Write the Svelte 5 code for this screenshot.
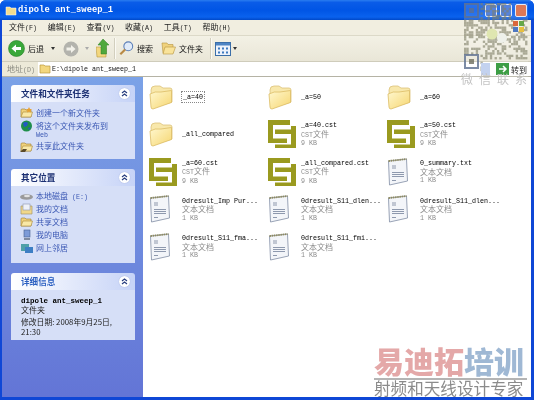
<script>
  const files = [
    { n: '_a=40', k: 'folder', focus: true },
    { n: '_a=50', k: 'folder' },
    { n: '_a=60', k: 'folder' },
    { n: '_all_compared', k: 'folder' },
    { n: '_a=40.cst', k: 'cst' },
    { n: '_a=50.cst', k: 'cst' },
    { n: '_a=60.cst', k: 'cst' },
    { n: '_all_compared.cst', k: 'cst' },
    { n: '0_summary.txt', k: 'txt' },
    { n: '0dresult_Imp Pur...', k: 'txt' },
    { n: '0dresult_S11_dlen...', k: 'txt' },
    { n: '0dresult_S11_dlen...', k: 'txt' },
    { n: '0dresult_S11_fma...', k: 'txt' },
    { n: '0dresult_S11_fmi...', k: 'txt' }
  ];
  const tasks = [
    { t: '创建一个新文件夹', i: 'newf' },
    { t: '将这个文件夹发布到', i: 'globe', sub: 'Web' },
    { t: '共享此文件夹', i: 'share' }
  ];
  const places = [
    { t: '本地磁盘', m: ' (E:)', i: 'disk' },
    { t: '我的文档', i: 'docs' },
    { t: '共享文档', i: 'sdocs' },
    { t: '我的电脑', i: 'pc' },
    { t: '网上邻居', i: 'net' }
  ];
  const menus = [['文件', 'F'], ['编辑', 'E'], ['查看', 'V'], ['收藏', 'A'], ['工具', 'T'], ['帮助', 'H']];

  let seed = 12345;
  const rnd = () => ((seed = (seed * 1103515245 + 12345) & 0x7fffffff) / 0x7fffffff);
  const qr = [];
  const cols = 27, rowsN = 30, m = 2.35;
  const inFinder = (c, r) => (c < 7 && r < 7) || (c < 7 && r > 21) || (c > 19 && r < 7);
  for (let r = 0; r < rowsN; r++) {
    for (let c = 0; c < cols; c++) {
      if (!inFinder(c, r) && !(r > 23 && c > 7) && rnd() > 0.5) qr.push({ x: c * m, y: r * m });
    }
  }
</script>

{#snippet folderIcon()}
  <svg class="ic" width="24" height="26" viewBox="0 0 24 26">
    <path d="M2 6Q2 2 6 2H11L14 4H21Q23 4 23 6V18L3 24Z" fill="#f8e8ac" stroke="#dcc27a" stroke-width=".8" />
    <path d="M1 10Q6 7 12 8L22.500 6.500V18.500L4 25Q2 25 2 23Z" fill="url(#fg)" stroke="#dcbc66" stroke-width=".8" />
  </svg>
{/snippet}

{#snippet cstIcon()}
  <svg class="ic" width="28" height="28" viewBox="0 0 28 28">
    <path d="M0 0H22V5H5V18.500H19V23H0ZM7 9.500H23V6H28V28H7V24.500H23V14H7Z" fill="#9a9a1f" />
  </svg>
{/snippet}

{#snippet txtIcon()}
  <svg class="ic" width="22" height="28" viewBox="0 0 22 28">
    <path d="M1.500 3L19.500 1L20.500 23L2.500 27Z" fill="#f3f5f9" stroke="#8d99ae" stroke-width=".9" />
    <path d="M1.500 3L19.500 1" stroke="#8f8a5e" stroke-width="1.800" stroke-dasharray="1.500 .7" />
    <path d="M5 8H9M5 10H9M5 14.500H17M5 16.500H17M5 18.500H17M5 22.500H9" stroke="#74829a" stroke-width=".8" />
  </svg>
{/snippet}

{#snippet smallIcon(i)}
  <svg class="sic" width="13" height="12" viewBox="0 0 13 12">
    {#if i === 'globe'}
      <circle cx="6.500" cy="6" r="5.500" fill="#1f8f4a" /><path d="M3 3Q6 1 8 3L7 6L4 7ZM8 8L11 7L9 10Z" fill="#2458c4" />
    {:else if i === 'disk'}
      <ellipse cx="6.500" cy="7" rx="6.500" ry="2.800" fill="#9a9a9a" /><ellipse cx="7" cy="6" rx="3" ry="1.200" fill="#e2e2e2" />
    {:else if i === 'pc'}
      <rect x="4" y="1" width="6" height="7" fill="#7d9bd8" stroke="#47618f" stroke-width=".6" /><rect x="4" y="9" width="6" height="2" fill="#7f8aa0" />
    {:else if i === 'net'}
      <rect x="1" y="2" width="8" height="7" fill="#4fa0a8" /><rect x="5" y="5" width="8" height="6" fill="#3d7fc4" />
    {:else if i === 'docs'}
      <path d="M1 3H12V11H1Z" fill="#f1d88a" stroke="#a89a6a" stroke-width=".7" /><rect x="3" y="1" width="7" height="6" fill="#eef1f8" stroke="#8a95ad" stroke-width=".6" />
    {:else}
      <path d="M1 3Q1 2 2 2H5L6 3H11V10H1Z" fill="#f0d27c" stroke="#a8873a" stroke-width=".7" />
      <path d="M1 10L3 5H12.500L11 10Z" fill="#f9e8a6" stroke="#a8873a" stroke-width=".6" />
      {#if i === 'share'}<path d="M0 11L3 8H7L5 11Z" fill="#5a4a2a" />{/if}
      {#if i === 'newf'}<path d="M9 0L10 2L12 2L10.500 3.500L11 5.500L9 4.500L7 5.500L7.500 3.500L6 2L8 2Z" fill="#e8a030" />{/if}
    {/if}
  </svg>
{/snippet}

{#snippet chev()}
  <span class="chev">
    <svg width="9" height="9" viewBox="0 0 9 9"><path d="M2 4L4.500 2L7 4M2 7L4.500 5L7 7" fill="none" stroke="#2a3f80" stroke-width="1.200" /></svg>
  </span>
{/snippet}

<svg class="defs" width="0" height="0" aria-hidden="true">
  <defs>
    <linearGradient id="fg" x1="0" y1="0" x2="1" y2="1">
      <stop offset="0" stop-color="#fff8d0" /><stop offset="1" stop-color="#f6d671" />
    </linearGradient>
  </defs>
</svg>

<div class="window">
  <header class="title">
    <svg width="12" height="11" viewBox="0 0 12 11"><path d="M1 2H5L6 3H11V10H1Z" fill="#f3dc8e" stroke="#fff" stroke-width=".5" /></svg>
    <span class="ttext">dipole ant_sweep_1</span>
    <span class="ctrls"><i class="cb"></i><i class="cb"></i><i class="cb close"></i></span>
  </header>

  <div class="inner">
    <nav class="menu">
      {#each menus as [a, b]}
        <span class="mi">{a}<span class="paren">(<u>{b}</u>)</span></span>
      {/each}
    </nav>

    <div class="tools">
      <svg class="back" width="17" height="17" viewBox="0 0 17 17">
        <circle cx="8.500" cy="8.500" r="8" fill="#3aa83a" stroke="#2a7f2a" stroke-width=".6" />
        <path d="M3.500 8.500L8 4.500V7H13V10H8V12.500Z" fill="#fff" />
      </svg>
      <span class="tl">后退</span>
      <i class="darr d1"></i>
      <svg class="fwd" width="16" height="16" viewBox="0 0 16 16">
        <circle cx="8" cy="8" r="7.500" fill="#b3b3ad" />
        <path d="M12.500 8L8 4V6.500H3.500V9.500H8V12Z" fill="#f2f1ea" />
      </svg>
      <i class="darr d2"></i>
      <svg class="up" width="15" height="19" viewBox="0 0 15 19">
        <path d="M0 8H4L5 9H10V18L1 18Z" fill="#f3d77e" stroke="#b9983f" stroke-width=".6" />
        <path d="M7 0L13 6H10.500V15H5V6H2Z" fill="#4fa83c" stroke="#2f7f26" stroke-width=".5" />
      </svg>
      <i class="sep s1"></i>
      <svg class="search" width="15" height="15" viewBox="0 0 17 17">
        <circle cx="10.500" cy="6" r="5" fill="#dfeaf8" stroke="#5b7fb8" stroke-width="1.200" />
        <path d="M7 9.500L1.500 15" stroke="#b98a45" stroke-width="2.400" />
      </svg>
      <span class="tl">搜索</span>
      <svg class="fold" width="15" height="15" viewBox="0 0 15 15">
        <path d="M1 2H6L7 3.500H12V12H2Z" fill="#f0d27c" stroke="#b5933f" stroke-width=".6" />
        <path d="M2 13L4 6H14.500L12 13Z" fill="#f9e39a" stroke="#b5933f" stroke-width=".6" />
      </svg>
      <span class="tl">文件夹</span>
      <i class="sep s2"></i>
      <svg class="views" width="16" height="14" viewBox="0 0 16 14">
        <rect x=".5" y=".5" width="15" height="13" fill="#eef3fb" stroke="#3b6ea8" />
        <rect x="1" y="1" width="14" height="2.500" fill="#4d84c4" />
        <path d="M3 5.500h2v2H3zM7 5.500h2v2H7zM11 5.500h2v2h-2zM3 9.500h2v2H3zM7 9.500h2v2H7zM11 9.500h2v2h-2z" fill="#3f7bc0" />
      </svg>
      <i class="darr d3"></i>
    </div>

    <div class="addr">
      <span class="alabel">地址<span class="paren">(<u>D</u>)</span></span>
      <div class="ainput">
        <svg width="12" height="10" viewBox="0 0 12 10"><path d="M1 1H5L6 2H11V9H1Z" fill="#f3d77e" stroke="#b9983f" stroke-width=".7" /></svg>
        <span class="mono">E:\dipole ant_sweep_1</span>
      </div>
    </div>

    <main class="body">
      <aside class="side">
        <section class="panel">
          <h3 class="ph"><span>文件和文件夹任务</span>{@render chev()}</h3>
          <div class="pb tasks">
            {#each tasks as x}
              <div class="link">
                {@render smallIcon(x.i)}
                <span class="lt">{x.t}{#if x.sub}<br /><span class="mono sub">{x.sub}</span>{/if}</span>
              </div>
            {/each}
          </div>
        </section>
        <section class="panel">
          <h3 class="ph"><span>其它位置</span>{@render chev()}</h3>
          <div class="pb places">
            {#each places as x}
              <div class="link">
                {@render smallIcon(x.i)}
                <span class="lt">{x.t}{#if x.m}<span class="mono">{x.m}</span>{/if}</span>
              </div>
            {/each}
          </div>
        </section>
        <section class="panel">
          <h3 class="ph det"><span>详细信息</span>{@render chev()}</h3>
          <div class="pb details">
            <b class="mono dn">dipole ant_sweep_1</b>
            <span>文件夹</span>
            <span class="dd">修改日期: 2008年9月25日,<br />21:30</span>
          </div>
        </section>
      </aside>

      <section class="files">
        {#each files as f}
          <div class="item">
            <div class="iconbox">
              {#if f.k === 'folder'}{@render folderIcon()}{:else if f.k === 'cst'}{@render cstIcon()}{:else}{@render txtIcon()}{/if}
            </div>
            <div class="meta">
              <span class="mono name" class:focus={f.focus}>{f.n}</span>
              {#if f.k === 'cst'}
                <span class="g"><span class="mono">CST </span>文件</span>
                <span class="g mono">9 KB</span>
              {:else if f.k === 'txt'}
                <span class="g">文本文档</span>
                <span class="g mono">1 KB</span>
              {/if}
            </div>
          </div>
        {/each}

        <div class="mark">
          <div class="big"><span class="red">易迪拓</span><span class="blue">培训</span></div>
          <div class="small">射频和天线设计专家</div>
        </div>
      </section>
    </main>
  </div>

  <div class="qr">
    <svg class="qrcode" width="64" height="71" viewBox="0 0 64 71">
      {#each qr as q}
        <rect x={q.x} y={q.y} width="2.350" height="2.350" fill="#7f7f68" fill-opacity=".62" />
      {/each}
      <g fill="none" stroke="#5d6f90" stroke-width="2" stroke-opacity=".8">
        <rect x="1" y="1" width="13" height="13" />
        <rect x="1" y="52" width="13" height="13" />
      </g>
      <rect x="5" y="5" width="5" height="5" fill="#5d6f90" fill-opacity=".8" />
      <rect x="5" y="56" width="5" height="5" fill="#6f6f60" fill-opacity=".8" />
      <circle cx="28" cy="31" r="5.500" fill="#dfe6b0" />
      <circle cx="38" cy="35" r="5" fill="#eef0ea" />
      <rect x="49" y="18" width="5" height="5" fill="#d9663a" />
      <rect x="55" y="18" width="5" height="5" fill="#68a848" />
      <rect x="49" y="24" width="5" height="5" fill="#4f78c0" />
      <rect x="55" y="24" width="5" height="5" fill="#e8c040" />
    </svg>
    <div class="go">
      <i class="chevbox"></i>
      <svg width="13" height="12" viewBox="0 0 13 12"><rect width="13" height="12" fill="#3d9e45" /><path d="M3 6H9M7 3L10 6L7 9" stroke="#fff" stroke-width="1.500" fill="none" /></svg>
      <span>转到</span>
    </div>
    <div class="wx"><span>微</span><span>信</span><span>联</span><span>系</span></div>
  </div>
</div>

<style>
  :global(body) {
    margin: 0;
    background: #fff;
  }
  .defs {
    position: absolute;
  }
  .window {
    position: relative;
    width: 534px;
    height: 400px;
    overflow: hidden;
    display: flex;
    flex-direction: column;
    background: #0f47d6;
    border-radius: 6px 6px 0 0;
    font-family: "Noto Sans CJK SC", sans-serif;
    font-size: 8px;
    line-height: 9px;
    color: #222;
    filter: blur(0.3px);
  }
  .mono {
    font-family: "Liberation Mono", monospace;
    font-size: 6.67px;
  }
  .paren {
    font-family: "Liberation Mono", monospace;
    font-size: 6.67px;
  }
  .paren u {
    text-decoration: none;
  }
  .title {
    flex: 0 0 20px;
    height: 20px;
    box-sizing: border-box;
    padding: 0 7px 0 5px;
    display: flex;
    align-items: center;
    gap: 1px;
    background: linear-gradient(#2a7df0 0, #0a5ce8 12%, #0055e5 50%, #0a62ee 85%, #0048c8 100%);
  }
  .ttext {
    color: #fff;
    font: bold 8.800px "Liberation Mono", monospace;
    flex: 1;
  }
  .ctrls {
    display: flex;
    gap: 3px;
  }
  .cb {
    width: 12px;
    height: 13px;
    border-radius: 2px;
    background: #3a6fd8;
    border: 1px solid #dfe8fa;
    box-sizing: border-box;
  }
  .close {
    background: #d8623c;
  }
  .inner {
    flex: 1;
    min-height: 0;
    margin: 0 3px 3px 2px;
    display: flex;
    flex-direction: column;
  }
  .menu {
    flex: 0 0 16px;
    box-sizing: border-box;
    display: flex;
    align-items: center;
    padding-left: 7px;
    background: #f1eee0;
    border-bottom: 1px solid #dcd9c8;
  }
  .mi {
    width: 38.700px;
    color: #222;
  }
  .tools {
    flex: 0 0 26px;
    box-sizing: border-box;
    display: flex;
    align-items: center;
    background: linear-gradient(#f3f1e5, #e9e6d7);
    border-bottom: 1px solid #cfccbb;
    padding-left: 6px;
    color: #111;
  }
  .tl {
    margin-left: 3px;
  }
  .darr {
    width: 0;
    height: 0;
    border: 2px solid transparent;
    border-top: 3px solid #333;
    border-bottom: 0;
  }
  .d1 {
    margin: 0 8px 0 7px;
  }
  .d2 {
    border-top-color: #aaa;
    margin: 0 7px 0 6px;
  }
  .d3 {
    margin-left: 2px;
  }
  .sep {
    width: 1px;
    height: 21px;
    background: #d2cfbe;
    box-shadow: 1px 0 #fbfaf4;
  }
  .s1 {
    margin: 0 4px 0 3px;
  }
  .s2 {
    margin: 0 4px 0 7px;
  }
  .fold {
    margin-left: 8px;
  }
  .addr {
    flex: 0 0 15px;
    display: flex;
    align-items: center;
    background: #ece9d8;
    padding-left: 5px;
    box-sizing: border-box;
    border-bottom: 1px solid #b5b3a5;
  }
  .alabel {
    width: 31px;
    color: #8a8a80;
  }
  .ainput {
    flex: 1;
    height: 14px;
    background: #fff;
    display: flex;
    align-items: center;
    gap: 1px;
    padding-left: 1px;
    color: #111;
    font-size: 7px;
  }
  .body {
    flex: 1;
    min-height: 0;
    display: flex;
  }
  .side {
    flex: 0 0 141px;
    box-sizing: border-box;
    padding: 8px 8px 0 9px;
    display: flex;
    flex-direction: column;
    gap: 10px;
    background: linear-gradient(#7ba2e7, #6375d6);
  }
  .panel {
    border-radius: 3px 3px 0 0;
    overflow: hidden;
  }
  .ph {
    margin: 0;
    height: 17px;
    box-sizing: border-box;
    padding: 0 5px 0 10px;
    display: flex;
    align-items: center;
    justify-content: space-between;
    font-size: 8.600px;
    font-weight: 700;
    color: #1b2f72;
    background: linear-gradient(90deg, #fff, #c6d3f7);
  }
  .det {
    color: #2b5fc0;
  }
  .chev {
    width: 11px;
    height: 11px;
    border-radius: 50%;
    background: #fff;
    display: flex;
    align-items: center;
    justify-content: center;
    box-shadow: 0 0 1px #8a9ad0;
  }
  .pb {
    background: #d6dff7;
    box-sizing: border-box;
    color: #3b58b4;
    padding: 0 7px 0 9px;
  }
  .tasks {
    height: 57px;
    padding-top: 5px;
  }
  .places {
    height: 77px;
    padding-top: 4px;
  }
  .link {
    display: flex;
    gap: 3px;
    align-items: flex-start;
    margin-bottom: 1px;
  }
  .lt {
    padding-top: 1.500px;
    line-height: 8.500px;
  }
  .sic {
    flex: none;
  }
  .sub {
    color: #3b58b4;
  }
  .details {
    height: 50px;
    padding: 7px 6px 0 10px;
    display: flex;
    flex-direction: column;
    color: #222;
  }
  .dn {
    font-size: 7.500px;
    color: #000;
    line-height: 8px;
  }
  .dd {
    margin-top: 3px;
    line-height: 10px;
    font-size: 7.800px;
  }
  .files {
    position: relative;
    flex: 1;
    background: #fff;
    display: grid;
    grid-template-columns: repeat(3, 119px);
    grid-auto-rows: 37.500px;
    align-content: start;
    padding: 1px 0 0 6px;
  }
  .item {
    display: flex;
    align-items: center;
  }
  .iconbox {
    flex: 0 0 33px;
    display: flex;
    justify-content: flex-start;
  }
  .ic {
    display: block;
  }
  .meta {
    display: flex;
    flex-direction: column;
    align-items: flex-start;
    min-width: 0;
    line-height: 8.500px;
  }
  .name {
    color: #000;
    white-space: nowrap;
  }
  .focus {
    outline: 1px dotted #888;
    padding: 1px 1px;
  }
  .g {
    color: #8c8c8c;
  }
  .mark {
    position: absolute;
    right: 4px;
    bottom: 0;
    width: 153px;
  }
  .big {
    font-size: 30px;
    line-height: 36px;
    font-weight: 900;
    white-space: nowrap;
    border-bottom: 2px solid #b4b4b4;
  }
  .red {
    color: #e4a8a8;
  }
  .blue {
    color: #9fb8d4;
  }
  .small {
    font-size: 16.600px;
    line-height: 17px;
    color: #8b8b8b;
    white-space: nowrap;
  }
  .qr {
    position: absolute;
    left: 464px;
    top: 3px;
    width: 64px;
    height: 81px;
    background: rgba(255, 255, 255, 0.14);
  }
  .qr svg {
    display: block;
  }
  .qrcode {
    filter: blur(0.5px);
  }
  .go {
    position: absolute;
    left: 17px;
    top: 60px;
    display: flex;
    align-items: center;
    gap: 2px;
    color: #222;
  }
  .chevbox {
    width: 9px;
    height: 12px;
    margin-right: 4px;
    background: #c3d2ef;
  }
  .wx {
    position: absolute;
    left: -3px;
    width: 66px;
    bottom: 0;
    display: flex;
    justify-content: space-between;
    font-size: 12px;
    line-height: 10px;
    color: #c4c4c4;
  }
</style>
